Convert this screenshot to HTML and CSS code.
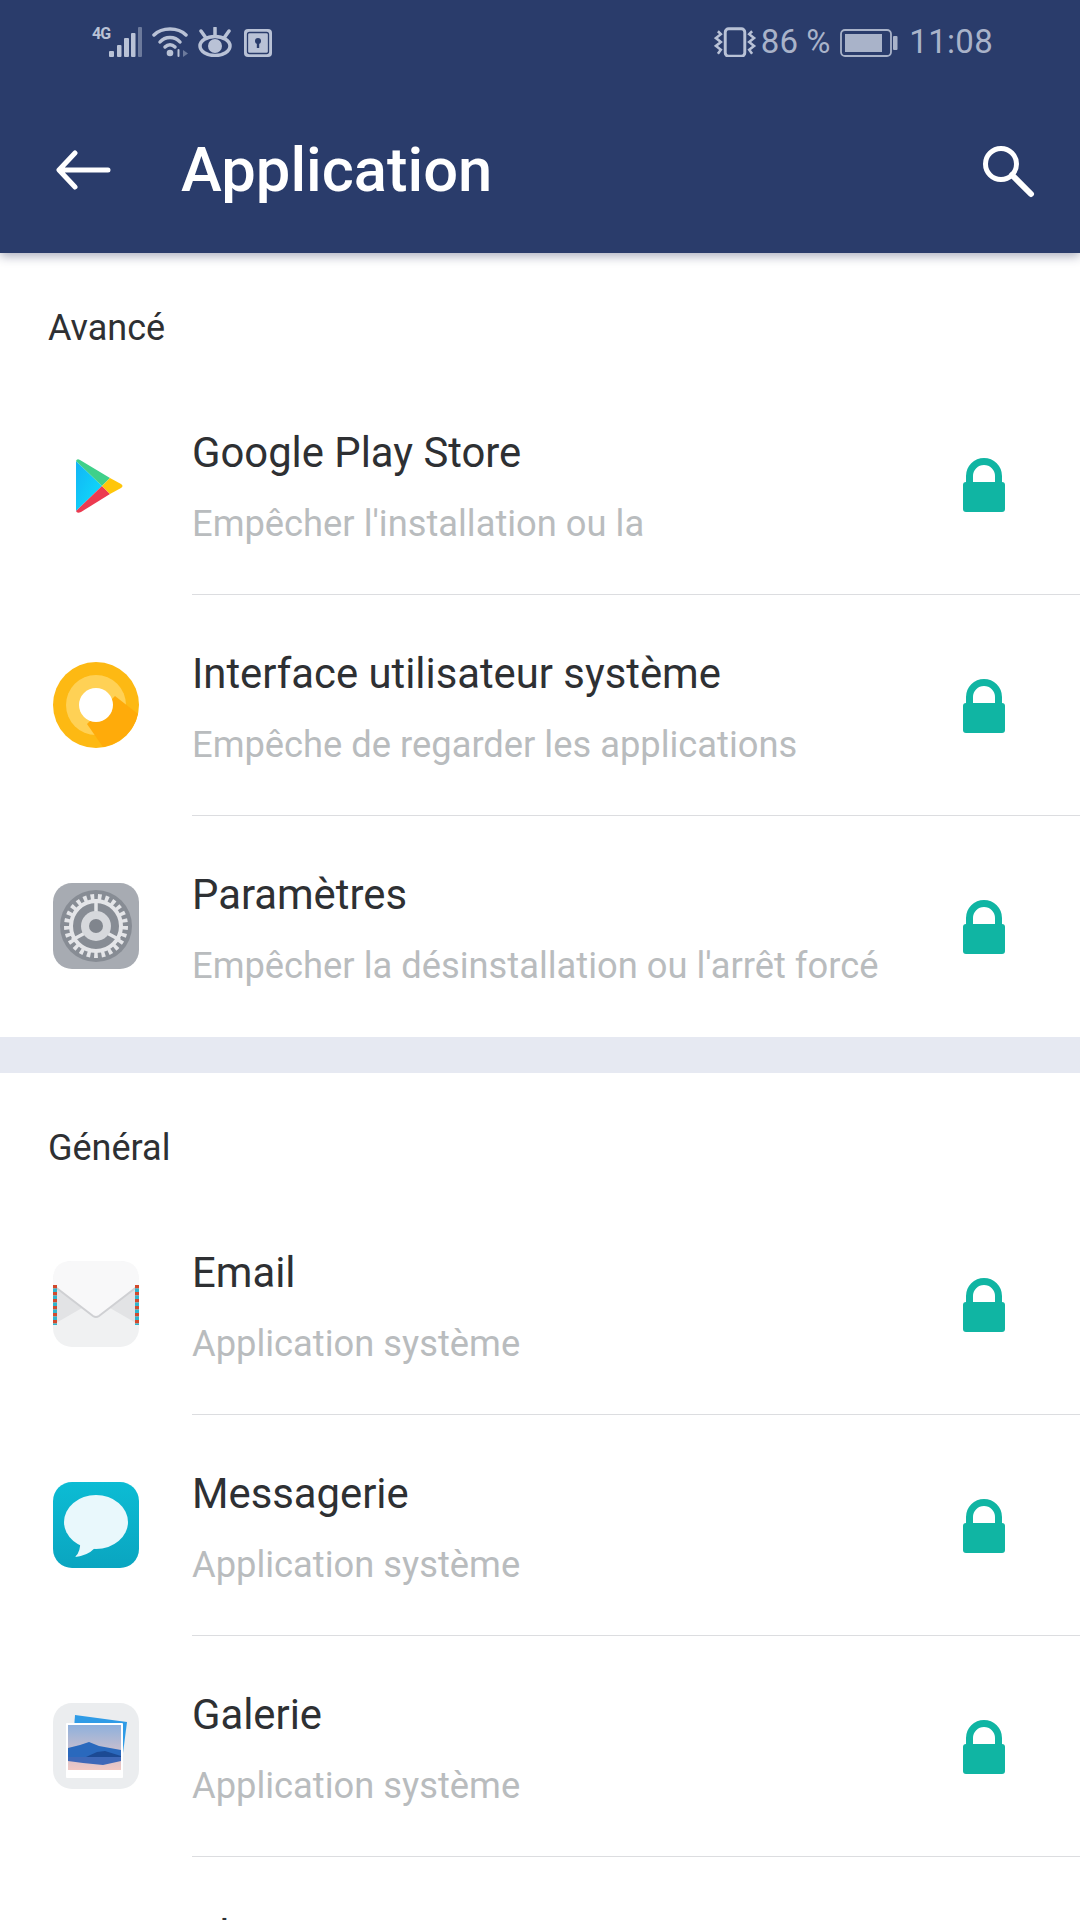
FILE: index.html
```html
<!DOCTYPE html>
<html lang="fr">
<head>
    <meta charset="UTF-8">
    <meta name="viewport" content="width=device-width, initial-scale=1.0">
    <title>Application</title>
    <link rel="stylesheet" href="styles.css">
</head>
<body>
    <svg class="defs" width="0" height="0">
        <symbol id="lock" viewBox="0 0 42 54">
            <path d="M3 24 V18 A18 18 0 0 1 39 18 V24 H32 V18 A11 11 0 0 0 10 18 V24 Z" fill="#10b5a3"/>
            <rect y="24" width="42" height="30" rx="3" fill="#10b5a3"/>
        </symbol>
    </svg>

    <div class="header">
        <div class="status-bar">
            <div class="status-left">
                <span class="net-label">4G</span>
                <svg class="icon-signal" width="34" height="30" viewBox="0 0 34 30" fill="#b9c2d6">
                    <rect x="0" y="24" width="5" height="6" rx="1"/>
                    <rect x="8" y="18" width="4.5" height="12" rx="1"/>
                    <rect x="15" y="11" width="5" height="19" rx="1"/>
                    <rect x="22" y="6" width="4.5" height="24" rx="1"/>
                    <rect x="29" y="0" width="4" height="30" rx="1" fill="#6c7a9c"/>
                </svg>
                <svg class="icon-wifi" width="36" height="30" viewBox="0 0 36 30" fill="none" stroke="#b9c2d6" stroke-width="3.5" stroke-linecap="round">
                    <path d="M2 8 C10 0 26 0 34 8"/>
                    <path d="M8 15 C13 9 23 9 28 15"/>
                    <path d="M13 20 C16 17 20 17 23 20"/>
                    <circle cx="18" cy="26" r="3.3" fill="#b9c2d6" stroke="none"/>
                    <path d="M26.5 23 V29" stroke-width="2"/>
                    <path d="M31 23 V30 L36 26.5 Z" fill="#6c7a9c" stroke="none"/>
                </svg>
                <svg class="icon-eye" width="34" height="30" viewBox="0 0 34 30" fill="none" stroke="#b9c2d6" stroke-width="3.5">
                    <ellipse cx="17" cy="19" rx="15" ry="9.5"/>
                    <circle cx="17" cy="19" r="7" fill="#b9c2d6" stroke="none"/>
                    <path d="M17 1 V8 M3 4 L8 11 M31 4 L26 11" stroke-linecap="round"/>
                </svg>
                <svg class="icon-key" width="28" height="28" viewBox="0 0 28 28">
                    <rect width="28" height="28" rx="4" fill="#b9c2d6"/>
                    <rect x="3.5" y="3.5" width="21" height="21" rx="2" fill="none" stroke="#2a3c6b" stroke-width="1.3"/>
                    <circle cx="14" cy="12" r="3" fill="#2a3c6b"/>
                    <rect x="12.8" y="12" width="2.4" height="7" fill="#2a3c6b"/>
                </svg>
            </div>
            <div class="status-right">
                <svg class="icon-vibrate" width="43" height="30" viewBox="0 0 44 30" fill="none" stroke="#b9c2d6">
                    <rect x="11.5" y="1.5" width="20" height="28" rx="3.5" stroke-width="3"/>
                    <path d="M4 4 L7 7 L2 11 L7 15 L2 19 L7 23 L4 27" stroke-width="2.6"/>
                    <path d="M39 4 L36 7 L41 11 L36 15 L41 19 L36 23 L39 27" stroke-width="2.6"/>
                </svg>
                <span class="status-text percent">86 %</span>
                <svg class="icon-battery" width="58" height="28" viewBox="0 0 58 28">
                    <rect x="1" y="1" width="50" height="26" rx="4" fill="none" stroke="#a9b3c9" stroke-width="1.8"/>
                    <rect x="5" y="5" width="37" height="18" fill="#a9b3c9"/>
                    <rect x="53" y="7" width="4.5" height="14" rx="1" fill="#a9b3c9"/>
                </svg>
                <span class="status-text time">11:08</span>
            </div>
        </div>
        <div class="toolbar">
            <svg class="back-icon" width="56" height="40" viewBox="0 0 56 40" fill="none" stroke="#fff" stroke-width="5" stroke-linecap="round" stroke-linejoin="round">
                <path d="M52 20 H4 M19 3 L3 20 L19 37"/>
            </svg>
            <span class="toolbar-title">Application</span>
            <svg class="search-icon" width="56" height="56" viewBox="0 0 56 56" fill="none" stroke="#fff" stroke-linecap="round">
                <circle cx="22" cy="22" r="15.5" stroke-width="5"/>
                <path d="M33 33 L52 52" stroke-width="6"/>
            </svg>
        </div>
    </div>

    <div class="section">
        <div class="section-label">Avancé</div>
        <div class="row">
            <div class="app-icon">
                <svg width="86" height="86" viewBox="0 0 86 86">
                    <defs>
                        <linearGradient id="playBlue" x1="0" y1="0" x2="1" y2="1">
                            <stop offset="0" stop-color="#12b4f5"/>
                            <stop offset="1" stop-color="#0fe0fa"/>
                        </linearGradient>
                    </defs>
                    <path d="M23 20 L23 70 L49 45 Z" fill="url(#playBlue)"/>
                    <path d="M23 20 Q24 17 27 19 L57 37 L49 45 Z" fill="#3fd08a"/>
                    <path d="M23 70 Q24 73 28 71 L57 53 L49 45 Z" fill="#ec3a50"/>
                    <path d="M57 37 L68 43 Q71 45 68 47 L57 53 L49 45 Z" fill="#ffc60a"/>
                </svg>
            </div>
            <div class="row-text">
                <div class="row-title">Google Play Store</div>
                <div class="row-sub">Empêcher l'installation ou la</div>
            </div>
            <svg class="lock" width="42" height="54"><use href="#lock"/></svg>
        </div>
        <div class="row">
            <div class="app-icon">
                <svg width="86" height="86" viewBox="0 0 86 86">
                    <circle cx="43" cy="43" r="43" fill="#fdb913"/>
                    <circle cx="43" cy="43" r="30" fill="#ffd155"/>
                    <path d="M62 34 L85 52 A43 43 0 0 1 50 85 L34 62 Z" fill="#ffab0a"/>
                    <circle cx="43" cy="43" r="17" fill="#fff"/>
                </svg>
            </div>
            <div class="row-text">
                <div class="row-title">Interface utilisateur système</div>
                <div class="row-sub">Empêche de regarder les applications</div>
            </div>
            <svg class="lock" width="42" height="54"><use href="#lock"/></svg>
        </div>
        <div class="row">
            <div class="app-icon">
                <svg width="86" height="86" viewBox="0 0 86 86">
                    <rect width="86" height="86" rx="19" fill="#a7abb2"/>
                    <circle cx="43" cy="43" r="36" fill="#878c94"/>
                    <circle cx="43" cy="43" r="25" fill="none" stroke="#e4e5e8" stroke-width="4"/>
                    <circle cx="43" cy="43" r="29" fill="none" stroke="#e4e5e8" stroke-width="6" stroke-dasharray="3.64 3.64"/>
                    <path d="M43 16 V30 M19 57 L32 50 M67 57 L54 50" stroke="#e4e5e8" stroke-width="3.5"/>
                    <circle cx="43" cy="43" r="15" fill="#d6d8dc"/>
                    <circle cx="43" cy="43" r="7" fill="#80858d"/>
                </svg>
            </div>
            <div class="row-text">
                <div class="row-title">Paramètres</div>
                <div class="row-sub">Empêcher la désinstallation ou l'arrêt forcé</div>
            </div>
            <svg class="lock" width="42" height="54"><use href="#lock"/></svg>
        </div>
    </div>

    <div class="band"></div>

    <div class="section">
        <div class="section-label">Général</div>
        <div class="row">
            <div class="app-icon">
                <svg width="86" height="86" viewBox="0 0 86 86">
                    <rect width="86" height="86" rx="19" fill="#f0f1f2"/>
                    <path d="M3 27 L29 47 L3 62 Z M83 27 L57 47 L83 62 Z" fill="#e2e3e5"/>
                    <path d="M0 19 Q0 0 19 0 H67 Q86 0 86 19 V24 L47 55 Q43 58 39 55 L0 24 Z" fill="#f8f8f9"/>
                    <path d="M1 25 L40 55 Q43 57 46 55 L85 25" fill="none" stroke="#cfd0d3" stroke-width="2"/>
                    <path d="M2 24 V64" stroke="#d2492c" stroke-width="4" stroke-dasharray="3.5 3.5"/>
                    <path d="M2 27.5 V64" stroke="#2fb4cc" stroke-width="4" stroke-dasharray="3.5 3.5"/>
                    <path d="M84 24 V64" stroke="#d2492c" stroke-width="4" stroke-dasharray="3.5 3.5"/>
                    <path d="M84 27.5 V64" stroke="#2fb4cc" stroke-width="4" stroke-dasharray="3.5 3.5"/>
                </svg>
            </div>
            <div class="row-text">
                <div class="row-title">Email</div>
                <div class="row-sub">Application système</div>
            </div>
            <svg class="lock" width="42" height="54"><use href="#lock"/></svg>
        </div>
        <div class="row">
            <div class="app-icon">
                <svg width="86" height="86" viewBox="0 0 86 86">
                    <defs>
                        <linearGradient id="msgBg" x1="0" y1="0" x2="0" y2="1">
                            <stop offset="0" stop-color="#0cbcd4"/>
                            <stop offset="1" stop-color="#0aa5c0"/>
                        </linearGradient>
                    </defs>
                    <rect width="86" height="86" rx="19" fill="url(#msgBg)"/>
                    <ellipse cx="43" cy="40" rx="32" ry="27" fill="#e9f8fc"/>
                    <path d="M27 58 Q28 70 22 75 Q34 74 42 66 Z" fill="#e9f8fc"/>
                </svg>
            </div>
            <div class="row-text">
                <div class="row-title">Messagerie</div>
                <div class="row-sub">Application système</div>
            </div>
            <svg class="lock" width="42" height="54"><use href="#lock"/></svg>
        </div>
        <div class="row">
            <div class="app-icon">
                <svg width="86" height="86" viewBox="0 0 86 86">
                    <defs>
                        <linearGradient id="sky" x1="0" y1="0" x2="0" y2="1">
                            <stop offset="0" stop-color="#8eb0dc"/>
                            <stop offset="1" stop-color="#f2c9c4"/>
                        </linearGradient>
                    </defs>
                    <rect width="86" height="86" rx="19" fill="#ebedef"/>
                    <path d="M22 12 L74 19 L70 50 L20 40 Z" fill="#2f9be6"/>
                    <rect x="13" y="20" width="57" height="55" rx="1" fill="#fff"/>
                    <rect x="15" y="22" width="53" height="45" fill="url(#sky)"/>
                    <path d="M15 45 L27 42 L36 39 L46 43 L68 47 V56 H15 Z" fill="#2a69bd"/>
                    <path d="M33 54 L44 49 L52 48 L68 53 V56 H33 Z" fill="#1c4a94"/>
                    <path d="M15 54 H68 V58 L50 62 L30 60 L15 58 Z" fill="#3e68b8"/>
                </svg>
            </div>
            <div class="row-text">
                <div class="row-title">Galerie</div>
                <div class="row-sub">Application système</div>
            </div>
            <svg class="lock" width="42" height="54"><use href="#lock"/></svg>
        </div>
        <div class="row">
            <div class="app-icon"></div>
            <div class="row-text">
                <div class="row-title">Alertes</div>
            </div>
        </div>
    </div>
</body>
</html>
```

FILE: styles.css
```css
html, body {
    height: 1920px;
    overflow: hidden;
}

body {
    margin: 0;
    font-family: Roboto, "Noto Sans", sans-serif;
    background-color: #fff;
    color: #2e3033;
}

.defs {
    display: block;
}

.header {
    height: 253px;
    background-color: #2a3c6b;
    box-shadow: 0 3px 10px rgba(42, 50, 90, 0.4);
    position: relative;
    display: flex;
    flex-direction: column;
}

.status-bar {
    height: 84px;
    box-sizing: border-box;
    padding: 27px 87px 0 92px;
    display: flex;
    justify-content: space-between;
    align-items: flex-start;
}

.status-left, .status-right {
    display: flex;
    align-items: flex-start;
}

.net-label {
    width: 17px;
    font-size: 16px;
    line-height: 14px;
    font-weight: 700;
    letter-spacing: -1px;
    color: #b9c2d6;
}

.icon-wifi {
    margin-left: 9px;
}

.icon-eye {
    margin-left: 10px;
}

.icon-key {
    margin-left: 12px;
    margin-top: 2px;
}

.status-text {
    font-size: 33px;
    line-height: 30px;
    color: #a9b3c9;
}

.percent {
    margin-left: 4px;
}

.icon-battery {
    margin-left: 10px;
    margin-top: 2px;
}

.time {
    margin-left: 11px;
    letter-spacing: 0.3px;
}

.toolbar {
    flex: 1;
    display: flex;
    align-items: center;
    padding: 3px 45px 0 56px;
}

.toolbar-title {
    margin-left: 69px;
    flex: 1;
    font-size: 61.5px;
    font-weight: 500;
    color: #fff;
}

.section-label {
    height: 120px;
    box-sizing: border-box;
    padding: 54px 0 0 48px;
    font-size: 36px;
}

.row {
    height: 221px;
    display: flex;
    align-items: center;
    padding-left: 53px;
    padding-right: 75px;
}

.app-icon {
    width: 86px;
    height: 86px;
    flex: none;
}

.row-text {
    align-self: stretch;
    flex: 1;
    margin-left: 53px;
    padding-top: 52px;
    box-sizing: border-box;
}

.row + .row {
    position: relative;
}

.row + .row::before {
    content: "";
    position: absolute;
    top: 0;
    left: 192px;
    right: 0;
    height: 1px;
    background-color: #dcdde0;
}

.row-title {
    font-size: 41.8px;
    line-height: 56px;
}

.row-sub {
    margin-top: 21px;
    font-size: 36.3px;
    line-height: 44px;
    color: #b9bcbe;
}

.lock {
    flex: none;
    margin-top: 3px;
}

.band {
    height: 36px;
    margin-top: 1px;
    background-color: #e6e9f2;
}
```
